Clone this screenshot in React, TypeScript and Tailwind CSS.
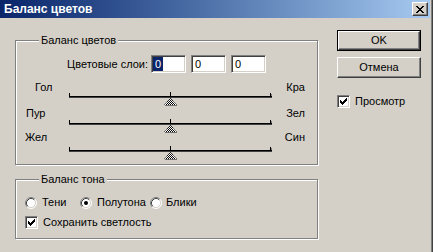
import React from "react";

const CHECK: [number, number][] = [
  [6, 0], [5, 1], [6, 1], [0, 2], [4, 2], [5, 2], [6, 2], [0, 3], [1, 3], [3, 3], [4, 3], [5, 3],
  [0, 4], [1, 4], [2, 4], [3, 4], [4, 4], [1, 5], [2, 5], [3, 5], [2, 6],
];

const XGLYPH: [number, number][] = [
  [0, 0], [1, 0], [6, 0], [7, 0],
  [1, 1], [2, 1], [5, 1], [6, 1],
  [2, 2], [3, 2], [4, 2], [5, 2],
  [3, 3], [4, 3],
  [2, 4], [3, 4], [4, 4], [5, 4],
  [1, 5], [2, 5], [5, 5], [6, 5],
  [0, 6], [1, 6], [6, 6], [7, 6],
];

function Pixels({ px, w, h }: { px: [number, number][]; w: number; h: number }) {
  return (
    <svg width={w} height={h} shapeRendering="crispEdges">
      {px.map(([x, y]) => (
        <rect key={`${x}-${y}`} x={x} y={y} width="1" height="1" fill="#000" />
      ))}
    </svg>
  );
}

function CheckBox() {
  return (
    <div className="w-[13px] h-[13px] shrink-0 bg-white border border-t-[#808080] border-l-[#808080] border-r-white border-b-white shadow-[inset_1px_1px_0_#404040,inset_-1px_-1px_0_#d4d0c8] flex items-center justify-center">
      <Pixels px={CHECK} w={7} h={7} />
    </div>
  );
}

function Radio({ on }: { on?: boolean }) {
  return (
    <svg width="12" height="12" className="shrink-0">
      <circle cx="6" cy="6" r="5" fill="#fff" />
      <path d="M2.11 9.89 A5.5 5.5 0 0 1 9.89 2.11" stroke="#808080" strokeWidth="1" fill="none" />
      <path d="M9.89 2.11 A5.5 5.5 0 0 1 2.11 9.89" stroke="#ffffff" strokeWidth="1" fill="none" />
      <path d="M2.82 9.18 A4.5 4.5 0 0 1 9.18 2.82" stroke="#404040" strokeWidth="1" fill="none" />
      <path d="M9.18 2.82 A4.5 4.5 0 0 1 2.82 9.18" stroke="#d4d0c8" strokeWidth="1" fill="none" />
      {on && <circle cx="6" cy="6" r="2" fill="#000" />}
    </svg>
  );
}

function Group({
  label,
  h,
  className,
  children,
}: {
  label: string;
  h: string;
  className?: string;
  children: React.ReactNode;
}) {
  return (
    <div
      className={`relative w-[303px] ${h} border border-[#808080] shadow-[inset_1px_1px_0_#fff,1px_1px_0_#fff] flex flex-col ${className ?? ""}`}
    >
      <span className="absolute left-[23px] top-[-7px] px-[2px] bg-[#d4d0c8] leading-[13px]">{label}</span>
      {children}
    </div>
  );
}

function Thumb() {
  return (
    <svg width="13" height="8" className="absolute left-[95px] top-[5px]" shapeRendering="crispEdges">
      <defs>
        <pattern id="dith" width="2" height="2" patternUnits="userSpaceOnUse">
          <rect width="2" height="2" fill="#ffffff" />
          <rect x="0" y="0" width="1" height="1" fill="#000" />
          <rect x="1" y="1" width="1" height="1" fill="#000" />
        </pattern>
      </defs>
      <polygon points="6.5,0 0.5,7 12.5,7" fill="url(#dith)" />
      <polygon points="6.5,0 0.5,7 12.5,7" fill="none" stroke="#303030" strokeWidth="0.6" />
    </svg>
  );
}

function Track({ className }: { className?: string }) {
  return (
    <div className={`relative ml-[53px] w-[203px] h-[10px] ${className ?? ""}`}>
      <div className="absolute left-0 top-0 w-[1px] h-[3px] bg-black" />
      <div className="absolute right-[1px] top-0 w-[1px] h-[3px] bg-black" />
      <div className="absolute right-0 top-[1px] w-[1px] h-[2px] bg-[#808080]" />
      <div className="absolute left-[101px] top-[-1px] w-[1px] h-[4px] bg-black" />
      <div className="mt-[3px] h-[2px] border-t border-black bg-[#404040]" />
      <Thumb />
    </div>
  );
}

function LabelRow({ left, right, pl, className }: { left: string; right: string; pl: string; className?: string }) {
  return (
    <div className={`flex justify-between h-[12px] leading-[12px] pr-[12px] ${pl} ${className ?? ""}`}>
      <span>{left}</span>
      <span>{right}</span>
    </div>
  );
}

function NumBox({ sel }: { sel?: boolean }) {
  return (
    <div className="w-[35px] h-[18px] bg-white border border-t-[#808080] border-l-[#808080] border-r-white border-b-white shadow-[inset_1px_1px_0_#404040,inset_-1px_-1px_0_#d4d0c8] flex items-center pl-[1px]">
      {sel ? (
        <span className="bg-[#0a246a] text-white px-[2px] leading-[14px]">0</span>
      ) : (
        <span className="px-[2px] leading-[14px]">0</span>
      )}
    </div>
  );
}

function Button({ children, def }: { children: React.ReactNode; def?: boolean }) {
  return def ? (
    <div className="w-[84px] h-[21px] border border-black flex">
      <div className="flex-1 border border-t-white border-l-white border-r-[#404040] border-b-[#404040] shadow-[inset_-1px_-1px_0_#808080] flex items-center justify-center">
        {children}
      </div>
    </div>
  ) : (
    <div className="w-[84px] h-[21px] border border-t-white border-l-white border-r-[#404040] border-b-[#404040] shadow-[inset_-1px_-1px_0_#808080] flex items-center justify-center">
      {children}
    </div>
  );
}

export default function App() {
  return (
    <div className="w-[433px] h-[252px] overflow-hidden bg-[#d4d0c8] pr-[3px] shadow-[inset_-1px_0_0_#404040,inset_-2px_0_0_#808080] flex flex-col text-[11px] leading-[13px] text-black font-['Liberation_Sans',Arial,sans-serif]">
      <div className="h-[18px] shrink-0 flex items-center justify-between pl-[4px] pr-[2px] bg-linear-to-r from-[#0a246a] to-[#a6caf0]">
        <span className="text-white font-bold text-[12px] leading-[14px]">Баланс цветов</span>
        <div className="w-[16px] h-[14px] bg-[#d4d0c8] border border-t-white border-l-white border-r-[#404040] border-b-[#404040] shadow-[inset_-1px_-1px_0_#808080] flex items-center justify-center">
          <Pixels px={XGLYPH} w={8} h={7} />
        </div>
      </div>
      <div className="flex">
        <div className="pl-[15px] pt-[22px] flex flex-col">
          <Group label="Баланс цветов" h="h-[125px]">
            <div className="mt-[14px] w-[250px] h-[18px] flex items-center justify-end">
              <span className="mr-[3px]">Цветовые слои:</span>
              <div className="flex gap-[5px]">
                <NumBox sel />
                <NumBox />
                <NumBox />
              </div>
            </div>
            <LabelRow left="Гол" right="Кра" pl="pl-[19px]" className="mt-[8px]" />
            <Track />
            <LabelRow left="Пур" right="Зел" pl="pl-[10px]" className="mt-[4px]" />
            <Track className="mt-[1px]" />
            <LabelRow left="Жел" right="Син" pl="pl-[9px]" className="mt-[1px]" />
            <Track className="mt-[4px]" />
          </Group>
          <Group label="Баланс тона" h="h-[60px]" className="mt-[14px]">
            <div className="mt-[16px] pl-[9px] h-[13px] flex items-center">
              <div className="w-[55px] flex items-center">
                <Radio />
                <span className="ml-[5px]">Тени</span>
              </div>
              <div className="w-[70px] flex items-center">
                <Radio on />
                <span className="ml-[5px]">Полутона</span>
              </div>
              <div className="flex items-center">
                <Radio />
                <span className="ml-[4px]">Блики</span>
              </div>
            </div>
            <div className="mt-[7px] pl-[9px] h-[13px] flex items-center">
              <CheckBox />
              <span className="ml-[5px]">Сохранить светлость</span>
            </div>
          </Group>
        </div>
        <div className="ml-[19px] pt-[12px] flex flex-col">
          <Button def>OK</Button>
          <div className="mt-[6px]">
            <Button>Отмена</Button>
          </div>
          <div className="mt-[17px] h-[13px] flex items-center">
            <CheckBox />
            <span className="ml-[5px]">Просмотр</span>
          </div>
        </div>
      </div>
    </div>
  );
}
